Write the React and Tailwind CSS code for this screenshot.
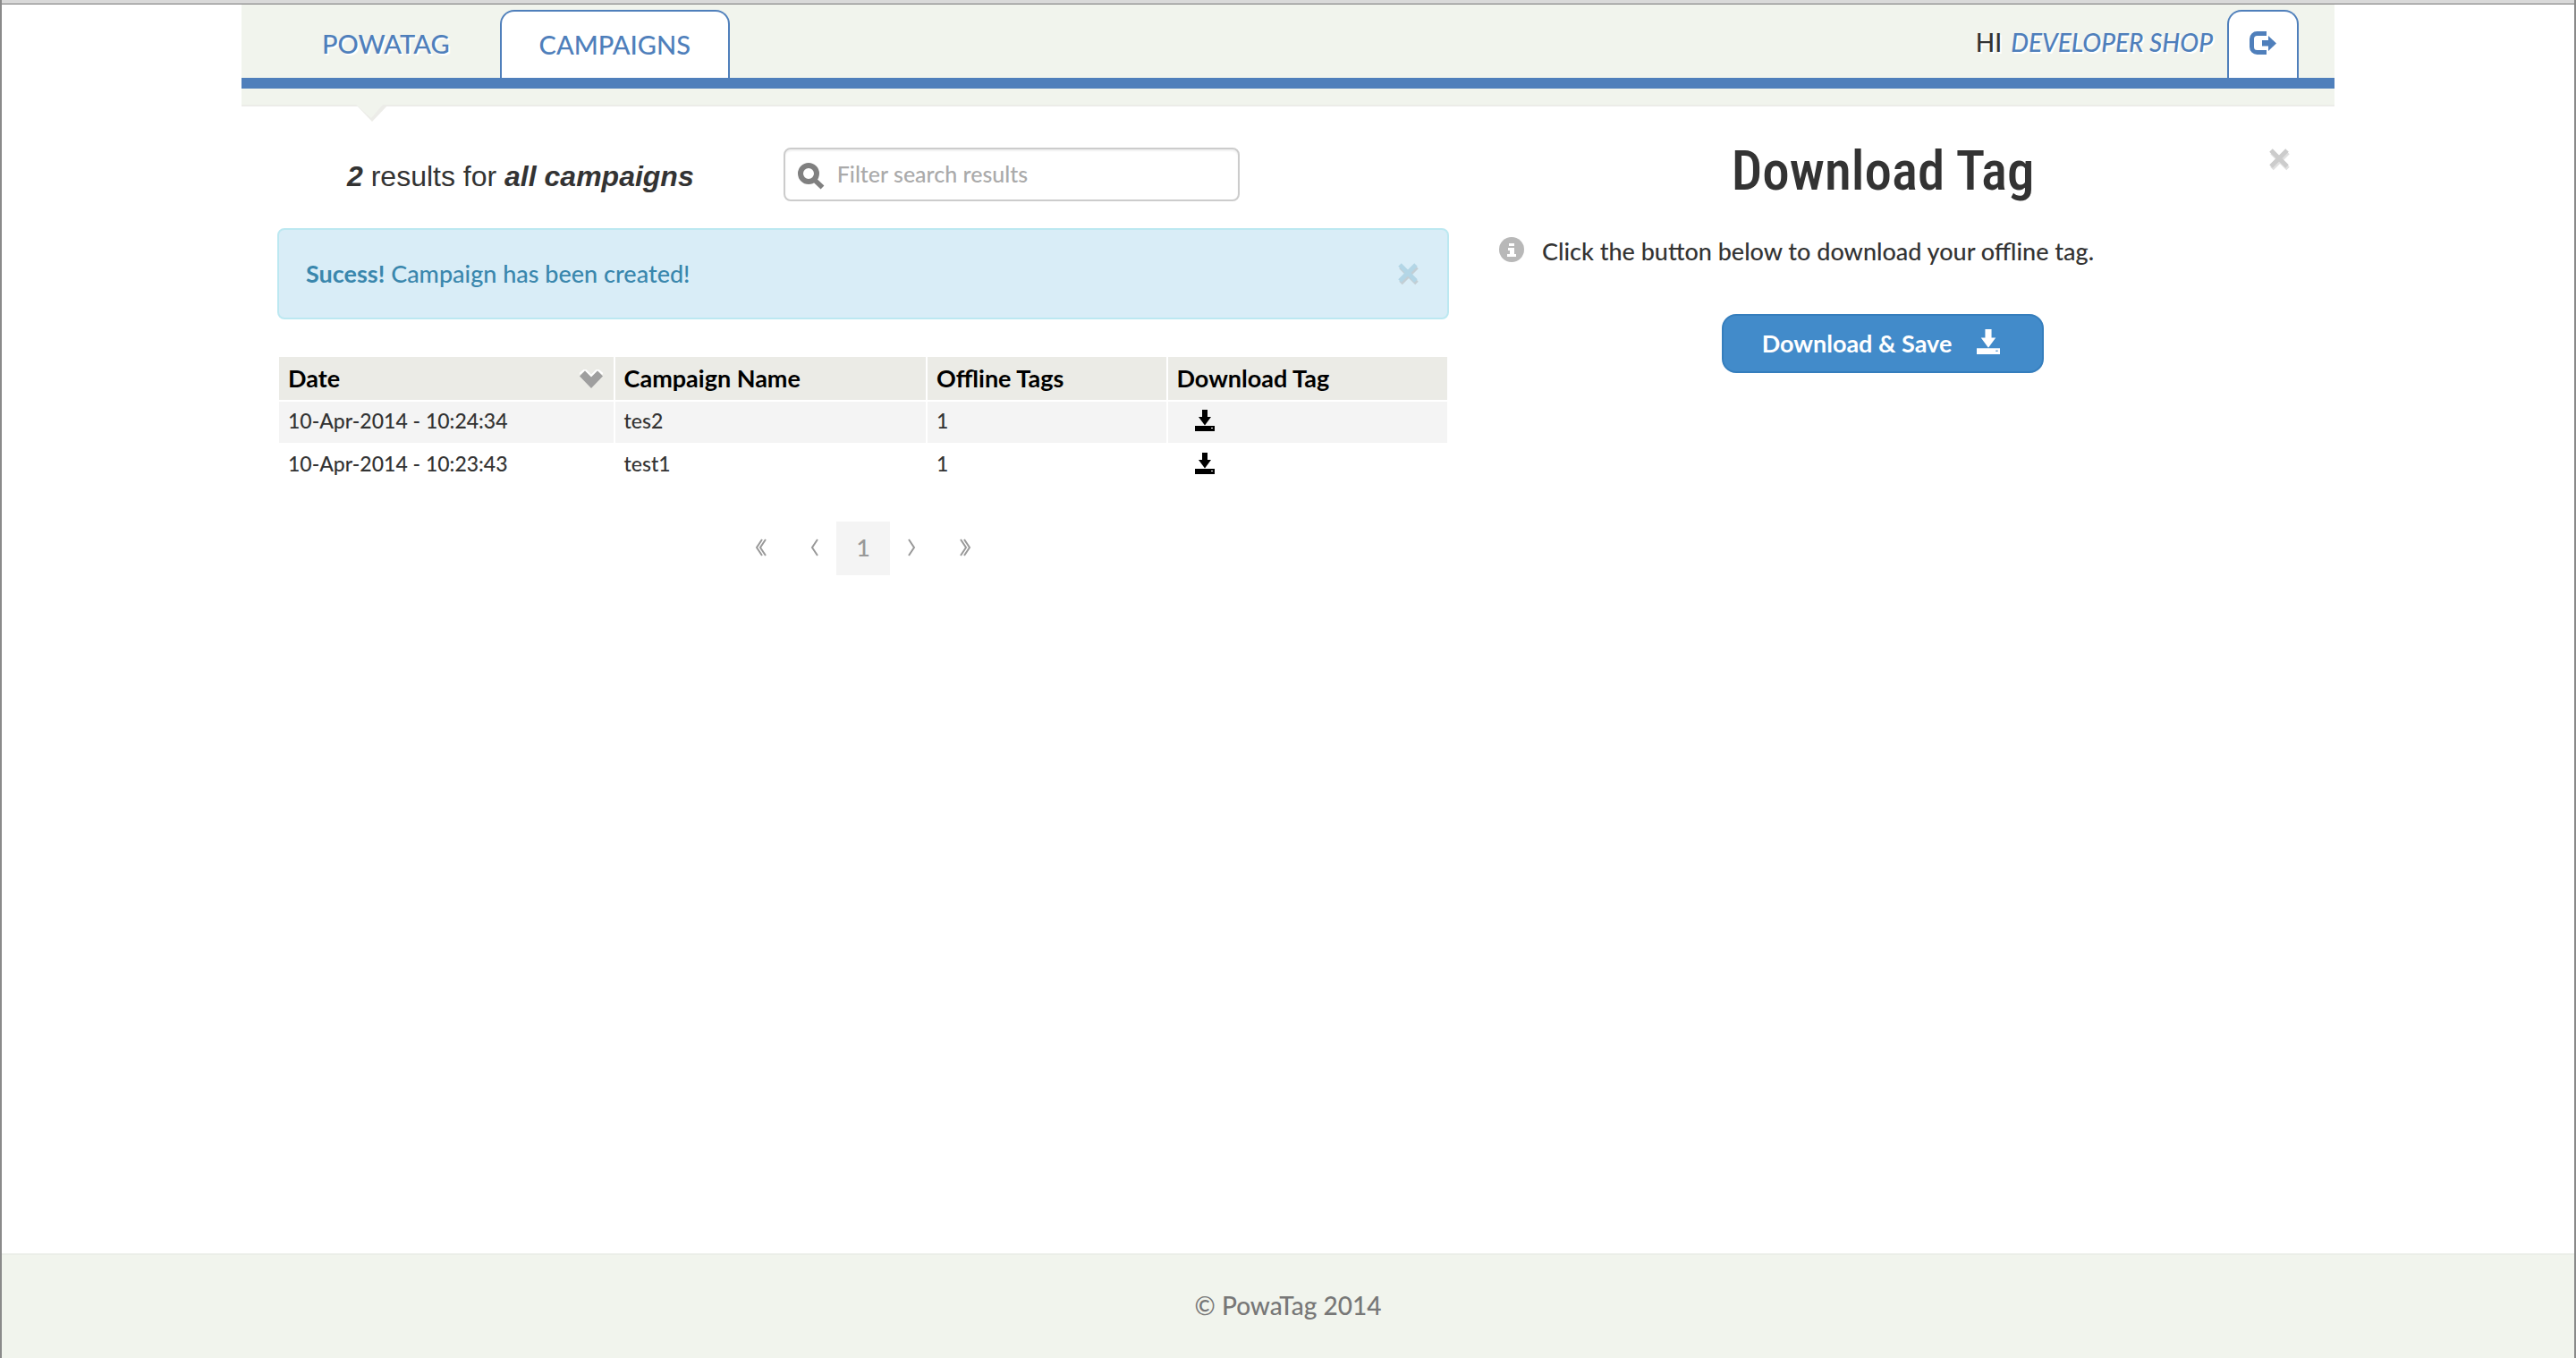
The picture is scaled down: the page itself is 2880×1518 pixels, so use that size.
import React from 'react';

const campaigns = [
  { date: '10-Apr-2014 - 10:24:34', name: 'tes2', tags: 1 },
  { date: '10-Apr-2014 - 10:23:43', name: 'test1', tags: 1 },
];

function DownloadIcon({ className, light }) {
  return (
    <svg viewBox="0 0 22 24" className={className} aria-hidden="true">
      <path d="M8 0h6v8h4l-7 9.500-7-9.500h4z" fill="currentColor" />
      <path d="M0 18h22v6H0z" fill="currentColor" />
      <path d="M18 20h2v1h-2z" fill={light ? '#428bca' : '#fff'} />
    </svg>
  );
}

function CloseIcon({ className, shadow }) {
  return (
    <svg viewBox="0 0 26 26" className={className} aria-hidden="true">
      <path d="M4 5.500 22 23.500M22 5.500 4 23.500" stroke={shadow} strokeWidth="5" />
      <path d="M3 3 21 21M21 3 3 21" stroke="currentColor" strokeWidth="5" />
    </svg>
  );
}

function Header() {
  return (
    <header className="bg-[#f1f4ed]">
      <div className="flex h-[94px] items-stretch justify-between border-b-12 border-[#4f7fbb] pt-1.5 pr-10">
        <nav className="flex text-[29px] font-medium text-[#4f7fbb]">
          <a href="#powatag" className="flex items-center pr-14 pl-[90px] [text-shadow:2px_2px_0_#fff]">
            POWATAG
          </a>
          <a
            href="#campaigns"
            className="flex items-center rounded-t-2xl border-2 border-b-0 border-[#4f7fbb] bg-white px-[42px]"
          >
            CAMPAIGNS
          </a>
        </nav>
        <div className="flex gap-4 text-[28px] font-medium">
          <p className="flex items-center gap-2.5 pb-1 [text-shadow:2px_2px_0_#fff]">
            HI
            <a href="#account" className="text-[#4f7fbb] italic">
              DEVELOPER SHOP
            </a>
          </p>
          <button
            type="button"
            aria-label="Log out"
            className="flex w-20 items-center justify-center rounded-t-2xl border-2 border-b-0 border-[#4f7fbb] bg-white text-[#4f7fbb]"
          >
            <svg viewBox="0 0 30 26" className="mb-1 w-[30px]" aria-hidden="true">
              <path
                d="M19 2.500H8.500a6 6 0 0 0-6 6v9a6 6 0 0 0 6 6H19"
                fill="none"
                stroke="currentColor"
                strokeWidth="5"
              />
              <path d="M14 10h7V5l9 8.500-9 8.500v-5.500h-7z" fill="currentColor" />
            </svg>
          </button>
        </div>
      </div>
      <div className="relative h-5 border-b-2 border-[#ecece8]">
        <svg viewBox="0 0 36 20" className="absolute top-[18px] left-32 w-9" aria-hidden="true">
          <path d="M0 0h36L18 19z" fill="#ecece8" />
          <path d="M0 0h30L17 15z" fill="#f1f4ed" />
        </svg>
      </div>
    </header>
  );
}

function Alert() {
  return (
    <div
      role="alert"
      className="mt-[30px] flex h-[102px] items-center justify-between rounded-lg border-2 border-[#bce8f1] bg-[#d9edf7] px-[30px] text-[27px] font-medium text-[#3a87ad]"
    >
      <p>
        <strong className="font-bold">Sucess!</strong> Campaign has been created!
      </p>
      <button type="button" aria-label="Dismiss" className="text-[#b3d6e6]">
        <CloseIcon className="w-[26px]" shadow="#c3ced4" />
      </button>
    </div>
  );
}

function CampaignTable() {
  const head = 'h-[50px] border-b-2 border-white bg-[#ebebe6] pl-2.5 text-left font-bold';
  const cell = 'h-12 border-b-2 border-white pb-1 pl-2.5';
  return (
    <table className="mt-[42px] w-full border-separate border-spacing-x-0.5 border-spacing-y-0 text-[23px] font-medium">
      <colgroup>
        <col className="w-[373px]" />
        <col className="w-[347px]" />
        <col className="w-[266px]" />
        <col className="w-[312px]" />
      </colgroup>
      <thead className="text-[27px] leading-8 text-black">
        <tr>
          <th className={head}>
            <button type="button" className="flex w-full items-center justify-between pr-3">
              Date
              <svg viewBox="0 0 26 21" className="w-[26px]" aria-hidden="true">
                <path d="M0 5 6 0l7 7 7-7 6 5" fill="none" stroke="#fff" strokeWidth="2" />
                <path d="M0 7.500 6 1.500l7 7 7-7 6 6-13 13.500z" fill="#9f9f9f" />
              </svg>
            </button>
          </th>
          <th className={head}>Campaign Name</th>
          <th className={head}>Offline Tags</th>
          <th className={head}>Download Tag</th>
        </tr>
      </thead>
      <tbody>
        {campaigns.map((c) => (
          <tr key={c.date} className="odd:bg-[#f4f4f4]">
            <td className={cell}>{c.date}</td>
            <td className={cell}>{c.name}</td>
            <td className={cell}>{c.tags}</td>
            <td className="border-b-2 border-white pb-1 pl-[30px]">
              <button type="button" aria-label={`Download tag for ${c.name}`} className="block text-black">
                <DownloadIcon className="w-[22px]" />
              </button>
            </td>
          </tr>
        ))}
      </tbody>
    </table>
  );
}

function Pagination() {
  const inner = 'flex h-15 w-12 items-center justify-center pb-0.5';
  const outer = 'flex h-15 w-[72px] items-center justify-center pb-0.5';
  const icon = 'h-5';
  return (
    <nav
      aria-label="Pages"
      className="mt-[38px] flex justify-center text-[27px] font-medium text-[#999] [&_path]:fill-none [&_path]:stroke-current [&_path]:stroke-2"
    >
      <button type="button" aria-label="First page" className={outer}>
        <svg viewBox="0 0 14 20" className={icon}><path d="M8 1 2 10l6 9M12 1 6 10l6 9" /></svg>
      </button>
      <button type="button" aria-label="Previous page" className={inner}>
        <svg viewBox="0 0 10 20" className={icon}><path d="M8 1 2 10l6 9" /></svg>
      </button>
      <button type="button" aria-current="page" className="h-15 w-15 bg-[#f4f4f4] pb-0.5">
        1
      </button>
      <button type="button" aria-label="Next page" className={inner}>
        <svg viewBox="0 0 10 20" className={icon}><path d="M2 1l6 9-6 9" /></svg>
      </button>
      <button type="button" aria-label="Last page" className={outer}>
        <svg viewBox="0 0 14 20" className={icon}><path d="M2 1l6 9-6 9M6 1l6 9-6 9" /></svg>
      </button>
    </nav>
  );
}

function DownloadPanel() {
  return (
    <aside className="flex-[930] font-medium">
      <div className="relative">
        <h1 className="pt-[34px] text-center font-['Roboto_Condensed','Open_Sans_Condensed',sans-serif] text-[61px] leading-[76px] font-medium">
          Download Tag
        </h1>
        <button type="button" aria-label="Close" className="absolute top-[46px] right-2 text-[#ccc]">
          <CloseIcon className="w-[26px]" shadow="#e0e0e0" />
        </button>
      </div>
      <p className="mt-8 flex items-center gap-5 pl-9 text-[27px] leading-10">
        <svg viewBox="0 0 28 28" className="mb-1 w-7" aria-hidden="true">
          <circle cx="14" cy="14" r="14" fill="#b8b8b8" />
          <path d="M11 7h6v3h-6zM10 12h7v7h2v3H9v-3h3v-4h-2z" fill="#fff" />
        </svg>
        Click the button below to download your offline tag.
      </p>
      <button
        type="button"
        className="mx-auto mt-[50px] flex h-[66px] w-[360px] items-center justify-center gap-7 rounded-2xl border-2 border-[#357ebd] bg-[#428bca] pr-1 text-[27px] font-bold text-white"
      >
        Download &amp; Save
        <DownloadIcon className="mb-1 w-[26px]" light />
      </button>
    </aside>
  );
}

export default function App() {
  return (
    <div className="flex min-h-screen flex-col border-x-2 border-[#8a8a8a] bg-white font-[Lato,sans-serif] text-[#333]">
      <div className="h-[5px] border-b border-[#777] bg-[#d9d9d9]" />
      <div className="mx-auto w-full max-w-[2340px] grow">
        <Header />
        <main className="flex gap-5 px-10">
          <section className="min-w-0 flex-[1310]">
            <div className="flex items-center gap-[100px] pt-[46px] pl-[78px]">
              <h2 className="pt-1 font-['Liberation_Sans',Arial,sans-serif] text-[32px] leading-10 whitespace-nowrap">
                <em className="font-bold">2</em> results for <em className="font-bold">all campaigns</em>
              </h2>
              <label className="flex h-15 w-[510px] items-center gap-3.5 rounded-lg border-2 border-[#ccc] px-3.5 shadow-[inset_0_2px_2px_rgba(0,0,0,0.06)]">
                <svg viewBox="0 0 30 30" className="mt-1 w-[30px] text-[#808080]" aria-hidden="true">
                  <circle cx="12" cy="12" r="9" fill="none" stroke="currentColor" strokeWidth="6" />
                  <path d="m18.500 19 9 8.500" stroke="currentColor" strokeWidth="5.500" />
                </svg>
                <input
                  type="text"
                  aria-label="Filter search results"
                  placeholder="Filter search results"
                  className="min-w-0 grow text-[25px] font-medium outline-none placeholder:text-[#aaa]"
                />
              </label>
            </div>
            <Alert />
            <CampaignTable />
            <Pagination />
          </section>
          <DownloadPanel />
        </main>
      </div>
      <footer className="flex h-[117px] items-center justify-center border-t-2 border-[#ebeee8] bg-[#f1f4ed] pb-1 text-[28px] font-medium text-[#777]">
        © PowaTag 2014
      </footer>
    </div>
  );
}
